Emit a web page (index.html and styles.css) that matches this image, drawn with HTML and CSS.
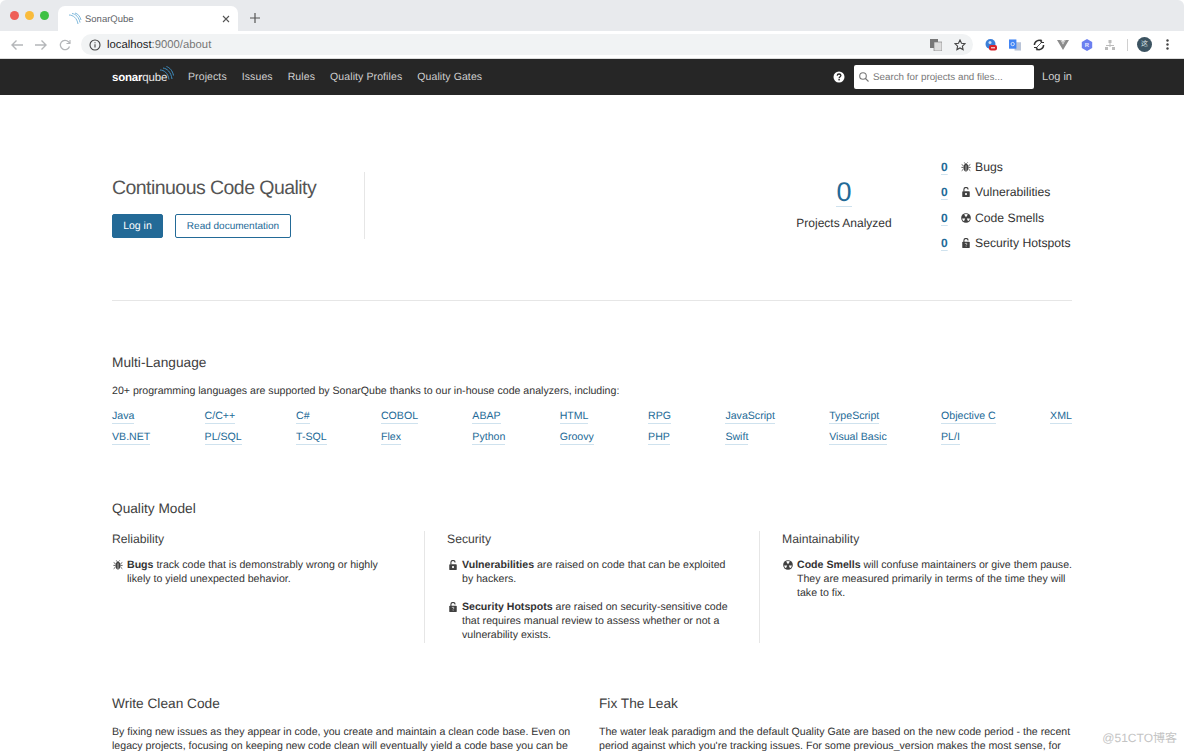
FILE: index.html
```html
<!DOCTYPE html>
<html lang="en">
<head>
  <meta charset="UTF-8">
  <meta name="viewport" content="width=device-width, initial-scale=1.0">
  <title>SonarQube</title>
  <link rel="stylesheet" href="styles.css">
</head>
<body>
  <div class="tabstrip">
    <div class="lights">
      <span class="light red"></span>
      <span class="light yellow"></span>
      <span class="light green"></span>
    </div>
    <div class="tab">
      <svg class="tab-logo" width="14" height="14" viewBox="0 0 14 14" fill="none" stroke="#7fb9dc" stroke-width="1">
        <path d="M1 3c4 0 8 3 9 9"/><path d="M4 1.500c4 .5 7 4 8 9"/><path d="M7 1c3 1 5 3 6 7"/>
      </svg>
      <span class="tab-title">SonarQube</span>
      <svg class="tab-close" width="8" height="8" viewBox="0 0 8 8" stroke="#555" stroke-width="1.100"><path d="M1 1l6 6M7 1l-6 6"/></svg>
    </div>
    <svg class="tab-new" width="10" height="10" viewBox="0 0 10 10" stroke="#555" stroke-width="1.200"><path d="M5 0v10M0 5h10"/></svg>
  </div>

  <div class="toolbar">
    <svg class="tool" width="14" height="12" viewBox="0 0 14 12" fill="none" stroke="#b4b6b9" stroke-width="1.400"><path d="M13 6H2M6.500 1.500L2 6l4.500 4.500"/></svg>
    <svg class="tool" width="14" height="12" viewBox="0 0 14 12" fill="none" stroke="#b4b6b9" stroke-width="1.400"><path d="M1 6h11M7.500 1.500L12 6l-4.500 4.500"/></svg>
    <svg class="tool" width="12" height="12" viewBox="0 0 12 12" fill="none" stroke="#b4b6b9" stroke-width="1.300"><path d="M10.500 7.500A4.700 4.700 0 1 1 9.500 2.800L11 4.300"/><path d="M11 1v3.500H7.500" stroke-width="1.100"/></svg>
    <div class="omnibox">
      <svg width="12" height="12" viewBox="0 0 12 12" fill="none" stroke="#444" stroke-width="1.100"><circle cx="6" cy="6" r="5"/><path d="M6 5.200v3.300M6 3.200v1"/></svg>
      <span class="url"><b>localhost</b>:9000/about</span>
      <svg class="omni-translate" width="12" height="12" viewBox="0 0 12 12"><rect width="8" height="9" fill="#777"/><rect x="4" y="3" width="8" height="9" fill="#ddd" stroke="#777" stroke-width=".6"/></svg>
      <svg class="omni-star" width="12" height="12" viewBox="0 0 12 12" fill="none" stroke="#444" stroke-width="1.100"><path d="M6 1l1.500 3.300 3.500.4-2.600 2.400.7 3.500L6 8.900 2.900 10.600l.7-3.500L1 4.700l3.500-.4z"/></svg>
    </div>
    <div class="extensions">
      <svg width="12" height="12" viewBox="0 0 12 12"><circle cx="5.500" cy="5" r="5" fill="#3b7fd8"/><circle cx="5" cy="3.500" r="1.500" fill="#cfe0f7"/><rect x="4" y="6" width="8" height="5.500" rx="2" fill="#d8232a"/><rect x="6" y="8.300" width="4" height="1" fill="#fff"/></svg>
      <svg width="12" height="12" viewBox="0 0 13 12"><rect x="6" y="3" width="7" height="9" fill="#b9c4d8"/><rect width="8" height="10" fill="#4285f4"/><circle cx="4" cy="5" r="1.800" fill="none" stroke="#fff" stroke-width=".8"/></svg>
      <svg width="12" height="12" viewBox="0 0 12 12" fill="none" stroke="#333" stroke-width="1.500"><path d="M1.400 6A4.600 4.600 0 0 1 9 2.500"/><path d="M10.600 6A4.600 4.600 0 0 1 3 9.500"/><path d="M8 .5v3h3M4 11.500v-3H1" stroke-width="1"/><path d="M4 8l4-4" stroke-width=".8"/></svg>
      <svg width="12" height="10" viewBox="0 0 12 10"><path d="M0 0h3.500L6 4.500 8.500 0H12L6 10z" fill="#8b8b8b"/><path d="M3.500 0L6 4.500 8.500 0H7L6 2 5 0z" fill="#c4c4c4"/></svg>
      <svg width="12" height="12" viewBox="0 0 12 12"><path d="M6 0l5.200 3v6L6 12 .8 9V3z" fill="#6b7ff0"/><text class="ext-letter" x="6" y="8.300">R</text></svg>
      <svg width="10" height="10" viewBox="0 0 10 10" fill="#bcbcbc"><rect x="3.500" width="3" height="3"/><rect y="7" width="3" height="3"/><rect x="7" y="7" width="3" height="3"/><rect x="4.500" y="3" width="1" height="4"/><rect x="1" y="5" width="8" height="1"/></svg>
      <span class="ext-sep"></span>
      <span class="avatar">这</span>
      <svg class="ext-menu" width="3" height="11" viewBox="0 0 3 11" fill="#444"><circle cx="1.500" cy="1.500" r="1.200"/><circle cx="1.500" cy="5.500" r="1.200"/><circle cx="1.500" cy="9.500" r="1.200"/></svg>
    </div>
  </div>

  <nav class="navbar">
    <div class="navbar-inner">
      <div class="brand">
        <span class="brand-text"><b>sonar</b>qube</span>
        <svg class="brand-waves" width="14" height="14" viewBox="0 0 14 14" fill="none" stroke="#3f8fc2" stroke-width="1"><path d="M0 4c4 0 8 3 9 9.500"/><path d="M3 2c4 .5 8 4 9 11"/><path d="M6.500 .5c3 1 6 4 7 9"/></svg>
      </div>
      <a class="nav-link">Projects</a>
      <a class="nav-link">Issues</a>
      <a class="nav-link">Rules</a>
      <a class="nav-link">Quality Profiles</a>
      <a class="nav-link">Quality Gates</a>
      <svg class="nav-help" width="12" height="12" viewBox="0 0 12 12"><circle cx="6" cy="6" r="5.500" fill="#fff"/><path d="M4.200 4.600C4.300 3.500 5 3 6 3s1.900.6 1.900 1.600S6.100 5.900 6.100 7.300" fill="none" stroke="#262626" stroke-width="1.300"/><rect x="5.400" y="8" width="1.400" height="1.400" fill="#262626"/></svg>
      <div class="nav-search">
        <svg width="10" height="10" viewBox="0 0 10 10" fill="none" stroke="#777" stroke-width="1.100"><circle cx="4" cy="4" r="3.300"/><path d="M6.500 6.500L9.500 9.500"/></svg>
        <span class="search-text">Search for projects and files...</span>
      </div>
      <a class="nav-login">Log in</a>
    </div>
  </nav>

  <main class="page">
    <section class="hero">
      <div class="hero-left">
        <h1 class="hero-title">Continuous Code Quality</h1>
        <div class="hero-buttons">
          <a class="btn btn-primary">Log in</a>
          <a class="btn btn-outline">Read documentation</a>
        </div>
      </div>
      <div class="hero-projects">
        <a class="big-count">0</a>
        <div class="projects-label">Projects Analyzed</div>
      </div>
      <ul class="hero-stats">
        <li><a class="stat-count">0</a>
          <svg class="ico" viewBox="0 0 12 12"><use href="#i-bug"/></svg>Bugs</li>
        <li><a class="stat-count">0</a>
          <svg class="ico" viewBox="0 0 12 12"><use href="#i-lock"/></svg>Vulnerabilities</li>
        <li><a class="stat-count">0</a>
          <svg class="ico" viewBox="0 0 12 12"><use href="#i-smell"/></svg>Code Smells</li>
        <li><a class="stat-count">0</a>
          <svg class="ico" viewBox="0 0 12 12"><use href="#i-hotspot"/></svg>Security Hotspots</li>
      </ul>
    </section>

    <section class="languages">
      <h2 class="section-title">Multi-Language</h2>
      <p class="languages-intro">20+ programming languages are supported by SonarQube thanks to our in-house code analyzers, including:</p>
      <div class="language-list">
        <div class="language-col"><a>Java</a><a>VB.NET</a></div>
        <div class="language-col"><a>C/C++</a><a>PL/SQL</a></div>
        <div class="language-col"><a>C#</a><a>T-SQL</a></div>
        <div class="language-col"><a>COBOL</a><a>Flex</a></div>
        <div class="language-col"><a>ABAP</a><a>Python</a></div>
        <div class="language-col"><a>HTML</a><a>Groovy</a></div>
        <div class="language-col"><a>RPG</a><a>PHP</a></div>
        <div class="language-col"><a>JavaScript</a><a>Swift</a></div>
        <div class="language-col"><a>TypeScript</a><a>Visual Basic</a></div>
        <div class="language-col"><a>Objective C</a><a>PL/I</a></div>
        <div class="language-col"><a>XML</a></div>
      </div>
    </section>

    <section class="quality">
      <h2 class="section-title">Quality Model</h2>
      <div class="quality-cols">
        <div class="quality-col">
          <h3 class="col-title">Reliability</h3>
          <div class="note">
            <svg class="ico" viewBox="0 0 12 12"><use href="#i-bug"/></svg>
            <p><b>Bugs</b> track code that is demonstrably wrong or highly likely to yield unexpected behavior.</p>
          </div>
        </div>
        <div class="quality-col">
          <h3 class="col-title">Security</h3>
          <div class="note">
            <svg class="ico" viewBox="0 0 12 12"><use href="#i-lock"/></svg>
            <p><b>Vulnerabilities</b> are raised on code that can be exploited by hackers.</p>
          </div>
          <div class="note">
            <svg class="ico" viewBox="0 0 12 12"><use href="#i-hotspot"/></svg>
            <p><b>Security Hotspots</b> are raised on security-sensitive code that requires manual review to assess whether or not a vulnerability exists.</p>
          </div>
        </div>
        <div class="quality-col">
          <h3 class="col-title">Maintainability</h3>
          <div class="note">
            <svg class="ico" viewBox="0 0 12 12"><use href="#i-smell"/></svg>
            <p><b>Code Smells</b> will confuse maintainers or give them pause. They are measured primarily in terms of the time they will take to fix.</p>
          </div>
        </div>
      </div>
    </section>

    <section class="bottom">
      <div class="bottom-col">
        <h2 class="section-title">Write Clean Code</h2>
        <p class="bottom-text">By fixing new issues as they appear in code, you create and maintain a clean code base. Even on legacy projects, focusing on keeping new code clean will eventually yield a code base you can be</p>
      </div>
      <div class="bottom-col">
        <h2 class="section-title">Fix The Leak</h2>
        <p class="bottom-text">The water leak paradigm and the default Quality Gate are based on the new code period - the recent period against which you're tracking issues. For some previous_version makes the most sense, for</p>
      </div>
    </section>
  </main>

  <div class="watermark">@51CTO博客</div>

  <svg class="icon-defs" width="0" height="0">
    <symbol id="i-bug" viewBox="0 0 12 12">
      <path d="M4 .5l1.500 2M8 .5L6.500 2M.8 3l2.200 1.500M11.200 3L9 4.500M.5 6.500H3M11.500 6.500H9M.8 10.500L3 8.500M11.200 10.500L9 8.500" stroke="#404040" stroke-width="1" fill="none"/>
      <path d="M6 2.200c1.800 0 3 1.600 3 4.300s-1.300 4.800-3 4.800-3-2-3-4.800 1.200-4.300 3-4.300z" fill="#404040"/>
      <path d="M6 4v7" stroke="#fff" stroke-width=".7"/>
    </symbol>
    <symbol id="i-lock" viewBox="0 0 12 12">
      <path d="M3.500 5.500V3a2.500 2.500 0 0 1 5 0" stroke="#404040" stroke-width="1.300" fill="none"/>
      <rect x="1.500" y="5" width="9" height="7" rx="1" fill="#404040"/>
      <circle cx="6" cy="8.500" r="1.300" fill="#fff"/>
    </symbol>
    <symbol id="i-hotspot" viewBox="0 0 12 12">
      <path d="M3.500 5V3a2.500 2.500 0 0 1 5 0" stroke="#404040" stroke-width="1.300" fill="none"/>
      <rect x="1.500" y="4.500" width="9" height="7.500" rx="1" fill="#404040"/>
      <path d="M4.800 7.200c.1-.7.6-1 1.200-1s1.200.4 1.200 1c0 .8-1.100.8-1.100 1.500" stroke="#fff" stroke-width=".8" fill="none"/>
      <rect x="5.700" y="9.300" width=".9" height=".9" fill="#fff"/>
    </symbol>
    <symbol id="i-smell" viewBox="0 0 12 12">
      <circle cx="6" cy="6" r="5.800" fill="#404040"/>
      <path d="M6 5L3.700 1.900A4.500 4.500 0 0 1 8.300 1.900z M7 6.500h3.600A4.500 4.500 0 0 1 8.400 10z M5 6.500L3.600 10A4.500 4.500 0 0 1 1.400 6.500z" fill="#fff"/>
    </symbol>
  </svg>
</body>
</html>
```

FILE: styles.css
```css
html, body {
  height: 751px;
  overflow: hidden;
}
body {
  margin: 0;
  font-family: "Liberation Sans", Arial, sans-serif;
  font-size: 10.6px;
  color: #333;
  background-color: #fff;
  text-rendering: geometricPrecision;
}
a {
  text-decoration: none;
}
h1, h2, h3, p, ul {
  margin: 0;
  padding: 0;
  font-weight: normal;
}

/* browser chrome */
.tabstrip {
  display: flex;
  align-items: flex-end;
  height: 31px;
  background-color: #e8eaed;
  border-radius: 6px 6px 0 0;
}
.lights {
  display: flex;
  gap: 6px;
  align-self: flex-start;
  margin: 11px 9px 0 10px;
}
.light {
  width: 9px;
  height: 9px;
  border-radius: 50%;
}
.red { background-color: #ee5f57; }
.yellow { background-color: #f9bb3b; }
.green { background-color: #3ec144; }
.tab {
  display: flex;
  align-items: center;
  width: 180px;
  height: 25px;
  box-sizing: border-box;
  padding: 0 8px 0 10px;
  background-color: #fff;
  border-radius: 7px 7px 0 0;
}
.tab-logo {
  flex: none;
}
.tab-title {
  margin-left: 3px;
  padding-top: 1px;
  font-size: 9.5px;
  color: #5f6368;
}
.tab-close {
  margin-left: auto;
}
.tab-new {
  margin: 0 0 8px 12px;
}
.toolbar {
  display: flex;
  align-items: center;
  height: 27px;
  background-color: #fff;
}
.tool {
  margin-left: 10px;
  width: 14px;
}
.omnibox {
  display: flex;
  align-items: center;
  width: 892px;
  height: 21px;
  box-sizing: border-box;
  margin-left: 9px;
  padding: 0 7px 0 8px;
  background-color: #f1f3f4;
  border-radius: 11px;
}
.url {
  margin-left: 6px;
  padding-top: 1px;
  font-size: 11.3px;
  color: #777;
}
.url b {
  font-weight: normal;
  color: #222;
}
.omni-translate {
  margin-left: auto;
}
.omni-star {
  margin-left: 12px;
}
.extensions {
  display: flex;
  align-items: center;
  gap: 12px;
  margin-left: 12px;
}
.ext-letter {
  fill: #e6e9ff;
  font-size: 6px;
  font-weight: bold;
  text-anchor: middle;
}
.ext-sep {
  width: 1px;
  height: 12px;
  background-color: #d0d0d0;
}
.avatar {
  width: 15px;
  height: 15px;
  margin-left: -3px;
  border-radius: 50%;
  background-color: #3c5361;
  color: #dfe6ea;
  font-size: 7px;
  line-height: 15px;
  text-align: center;
  font-family: "Noto Sans CJK SC", sans-serif;
}
.ext-menu {
  margin-left: 2px;
}

/* sonarqube nav */
.navbar {
  height: 36px;
  background-color: #262626;
  border-top: 1px solid #dcdcdc;
}
.navbar-inner {
  display: flex;
  align-items: center;
  height: 36px;
  margin: 0 112px;
}
.brand {
  display: flex;
  align-items: flex-start;
  width: 76px;
}
.brand-text {
  margin-top: 2px;
  color: #e8e8e8;
  font-size: 11.5px;
  letter-spacing: -.2px;
}
.brand-text b {
  color: #fff;
}
.brand-waves {
  margin-left: -7px;
  margin-top: -4px;
}
.nav-link {
  margin: 0 15px 1px 0;
  color: #d0d0d0;
  font-size: 10.5px;
  letter-spacing: .1px;
}
.nav-help {
  margin-left: auto;
}
.nav-search {
  display: flex;
  align-items: center;
  gap: 4px;
  width: 180px;
  height: 24px;
  box-sizing: border-box;
  margin-left: 9px;
  padding-left: 5px;
  background-color: #fff;
  border-radius: 2px;
  color: #777;
  font-size: 9.8px;
}
.search-text {
  padding-top: 1px;
}
.nav-login {
  margin: 0 0 1px 8px;
  color: #d0d0d0;
  font-size: 11px;
}

/* about page */
.page {
  margin: 0 112px;
}
.hero {
  display: flex;
  height: 205px;
  border-bottom: 1px solid #e6e6e6;
}
.hero-left {
  width: 252px;
  height: 67px;
  margin-top: 77px;
  border-right: 1px solid #e6e6e6;
}
.hero-title {
  margin-top: 1px;
  font-size: 19.5px;
  line-height: 30px;
  letter-spacing: -.55px;
  color: #555;
}
.hero-buttons {
  display: flex;
  gap: 12px;
  margin-top: 11px;
}
.btn {
  box-sizing: border-box;
  height: 24px;
  line-height: 23px;
  border: 1px solid #236a97;
  border-radius: 2px;
  font-size: 10px;
  text-align: center;
}
.btn-primary {
  width: 51px;
  background-color: #236a97;
  color: #fff;
  font-size: 10.5px;
}
.btn-outline {
  width: 116px;
  color: #236a97;
}
.hero-projects {
  width: 160px;
  margin: 84px 0 0 auto;
  text-align: center;
}
.big-count {
  display: inline-block;
  font-size: 27px;
  line-height: 27px;
  color: #236a97;
  border-bottom: 1px solid #cfe2ee;
}
.projects-label {
  margin-top: 9px;
  font-size: 12px;
  color: #333;
}
.hero-stats {
  list-style: none;
  margin: 59px 0 0 17px;
  width: 131px;
}
.hero-stats li {
  display: flex;
  align-items: center;
  height: 25.500px;
  font-size: 12.2px;
  color: #333;
}
.stat-count {
  width: 20px;
  font-size: 12px;
  color: #236a97;
  font-weight: bold;
  text-decoration: underline;
  text-decoration-color: #cfe2ee;
  text-underline-offset: 3px;
}
.ico {
  flex: none;
  width: 10px;
  height: 10px;
  margin-right: 4px;
}
.icon-defs {
  position: absolute;
}
.section-title {
  font-size: 13.7px;
  line-height: 18px;
  color: #404040;
}
.languages {
  padding-top: 53px;
}
.languages-intro {
  margin-top: 12px;
  line-height: 14px;
}
.language-list {
  display: flex;
  justify-content: space-between;
  margin-top: 11px;
}
.language-col {
  display: flex;
  flex-direction: column;
  align-items: flex-start;
  gap: 6px;
}
.language-col a {
  line-height: 14px;
  color: #236a97;
  border-bottom: 1px solid #cfe2ee;
}
.quality {
  padding-top: 55px;
}
.quality-cols {
  display: flex;
  margin-top: 13px;
}
.quality-col {
  width: 313px;
  height: 112px;
  padding-right: 23px;
  box-sizing: border-box;
  border-right: 1px solid #e6e6e6;
  margin-right: 22px;
}
.quality-col:last-child {
  width: 290px;
  padding-right: 0;
  border-right: none;
  margin-right: 0;
}
.col-title {
  font-size: 12.2px;
  line-height: 16px;
  color: #404040;
}
.note {
  display: flex;
  margin-top: 11px;
  gap: 4px;
}
.note + .note {
  margin-top: 14px;
}
.note .ico {
  margin: 2px 0 0 1px;
}
.note p {
  flex: 1;
  line-height: 14px;
}
.bottom {
  display: flex;
  gap: 14px;
  padding-top: 52px;
}
.bottom-col {
  width: 473px;
}
.bottom-text {
  margin-top: 12px;
  line-height: 14px;
}
.watermark {
  position: absolute;
  right: 7px;
  bottom: 5px;
  color: #c4c4c4;
  font-size: 12px;
  font-family: "Liberation Sans", "Noto Sans CJK SC", sans-serif;
}
```
